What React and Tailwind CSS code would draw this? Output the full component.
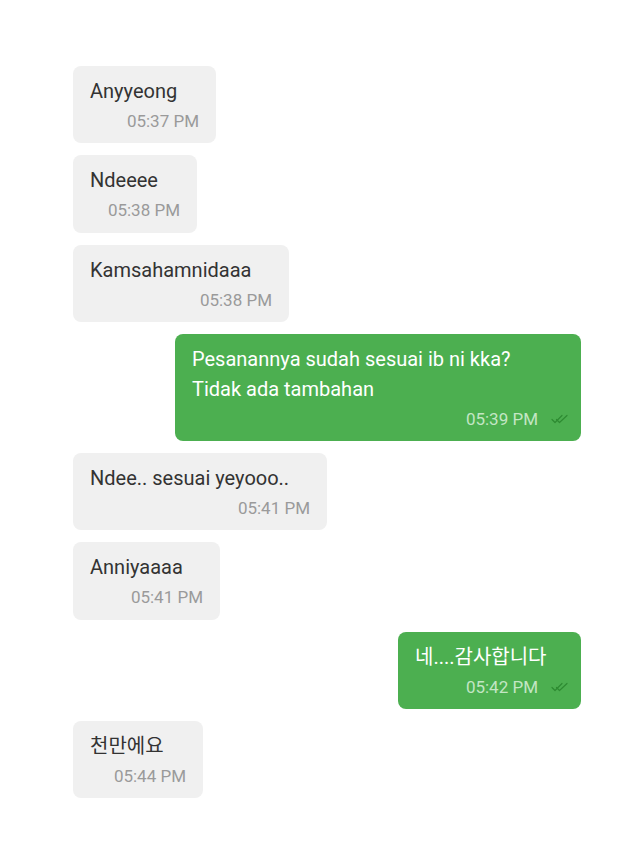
import React from 'react';

const messages = [
  { id: 1, text: ['Anyyeong'], time: '05:37 PM', w: 'w-[143px]' },
  { id: 2, text: ['Ndeeee'], time: '05:38 PM', w: 'w-[124px]' },
  { id: 3, text: ['Kamsahamnidaaa'], time: '05:38 PM', w: 'w-[216px]' },
  { id: 4, text: ['Pesanannya sudah sesuai ib ni kka?', 'Tidak ada tambahan'], time: '05:39 PM', w: 'w-[406px]', mine: true },
  { id: 5, text: ['Ndee.. sesuai yeyooo..'], time: '05:41 PM', w: 'w-[254px]' },
  { id: 6, text: ['Anniyaaaa'], time: '05:41 PM', w: 'w-[147px]' },
  { id: 7, text: ['네....감사합니다'], time: '05:42 PM', w: 'w-[183px]', mine: true },
  { id: 8, text: ['천만에요'], time: '05:44 PM', w: 'w-[130px]' },
];

const DoubleCheck = () => (
  <svg width="18" height="12" viewBox="0 0 18 12" fill="none" stroke="#2e8b32" strokeWidth="1.2" strokeLinecap="round" strokeLinejoin="round">
    <path d="M1 6.5l3 3L11 2.5" />
    <path d="M5.5 6.5l3 3L16 2.5" />
  </svg>
);

const Bubble = ({ msg }) => {
  if (msg.mine) {
    return (
      <div className="flex justify-end">
        <div className={`${msg.w} rounded-lg bg-[#4caf50] pl-[17px] pr-[12px] pt-[10px] pb-[7.3px]`}>
          {msg.text.map((line, i) => (
            <div key={i} className="h-[30px] whitespace-nowrap text-[20px] leading-[30px] text-white">{line}</div>
          ))}
          <div className="flex h-[30px] items-center justify-end gap-[13px]">
            <span className="text-[17px] leading-[30px] text-[#c3e6c4]">{msg.time}</span>
            <DoubleCheck />
          </div>
        </div>
      </div>
    );
  }
  return (
    <div className="flex justify-start">
      <div className={`${msg.w} rounded-lg bg-[#f0f0f0] px-[17px] pt-[10px] pb-[7.3px]`}>
        {msg.text.map((line, i) => (
          <div key={i} className="h-[30px] whitespace-nowrap text-[20px] leading-[30px] text-[#333333]">{line}</div>
        ))}
        <div className="h-[30px] text-right text-[17px] leading-[30px] text-[#9a9a9a]">{msg.time}</div>
      </div>
    </div>
  );
};

export default function App() {
  return (
    <div
      className="min-h-[853px] w-[640px] bg-white pl-[73px] pr-[59px] pt-[66px]"
      style={{ fontFamily: 'Roboto, "Noto Sans CJK KR", sans-serif' }}
    >
      <div className="flex flex-col gap-[12px]">
        {messages.map((m) => (
          <Bubble key={m.id} msg={m} />
        ))}
      </div>
    </div>
  );
}
